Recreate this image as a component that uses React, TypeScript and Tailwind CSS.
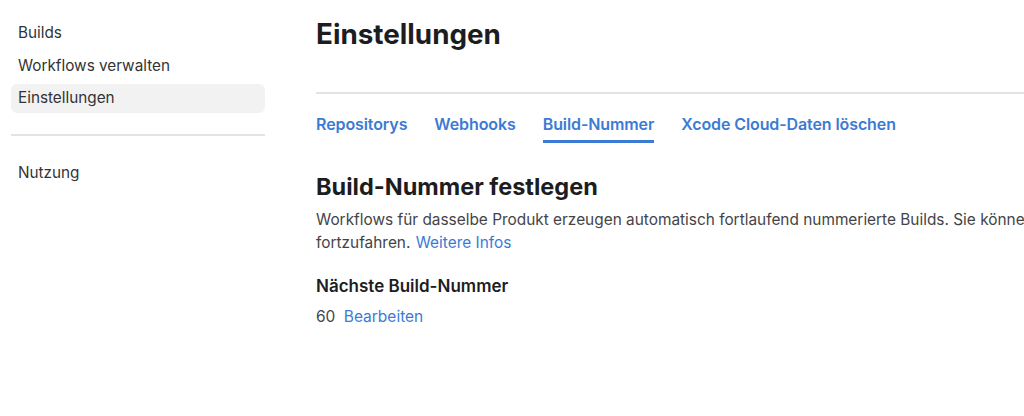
import React from 'react';

const navItems = ['Builds', 'Workflows verwalten', 'Einstellungen'];
const tabs = ['Repositorys', 'Webhooks', 'Build-Nummer', 'Xcode Cloud-Daten löschen'];

export default function App() {
  const active = 'Einstellungen';
  const activeTab = 'Build-Nummer';

  return (
    <div
      className="flex h-[416px] w-[1024px] overflow-hidden bg-white text-[#1d1d1f]"
      style={{ fontFamily: 'Inter, "Noto Sans", sans-serif' }}
    >
      {/* sidebar */}
      <aside className="w-[276px] shrink-0 px-[11px] pt-[19px]">
        <nav className="flex flex-col gap-[3.5px]">
          {navItems.map((item) => (
            <div
              key={item}
              className={
                'flex h-[29px] items-center rounded-[6px] pl-[7px] text-[15.3px] text-[#333336] ' +
                (item === active ? 'bg-[#f2f2f2]' : '')
              }
            >
              {item}
            </div>
          ))}
        </nav>
        <div className="mt-[21px] h-[2px] bg-[#e3e3e3]" />
        <div className="mt-[23px] flex h-[29px] items-center pl-[7px] text-[15.3px] text-[#333336]">
          Nutzung
        </div>
      </aside>

      {/* main */}
      <main className="min-w-0 flex-1 pl-[40px] pt-[18px]">
        <h1 className="h-[32px] text-[27.8px] font-bold leading-[32px] text-[#1d1d1f]">Einstellungen</h1>
        <div className="mt-[42px] h-[2px] w-[900px] bg-[#e3e3e3]" />

        <div className="mt-[20px] flex gap-[27px]">
          {tabs.map((t) => (
            <div key={t} className="flex flex-col">
              <span className="text-[16px] font-semibold leading-[20px] tracking-[-0.1px] whitespace-nowrap text-[#3b7bd4]">
                {t}
              </span>
              <div className={'mt-[6px] h-[3px] ' + (t === activeTab ? 'bg-[#3b7bd4]' : '')} />
            </div>
          ))}
        </div>

        <h2 className="mt-[30px] text-[23.5px] font-bold leading-[28px] text-[#1d1d1f]">Build-Nummer festlegen</h2>
        <p className="mt-[7px] w-[900px] text-[15.4px] leading-[23px] text-[#444447]">
          <span className="whitespace-nowrap">
            Workflows für dasselbe Produkt erzeugen automatisch fortlaufend nummerierte Builds. Sie können die Build-Nummer ändern, um
          </span>
          <br />
          fortzufahren. <a className="ml-[1px] text-[#3b7bd4]">Weitere Infos</a>
        </p>

        <h3 className="mt-[21px] text-[17px] font-semibold leading-[22px] text-[#1d1d1f]">Nächste Build-Nummer</h3>
        <div className="mt-[9px] text-[15.5px] leading-[22px] text-[#444447]">
          60 <a className="ml-[4px] text-[#3b7bd4]">Bearbeiten</a>
        </div>
      </main>
    </div>
  );
}
